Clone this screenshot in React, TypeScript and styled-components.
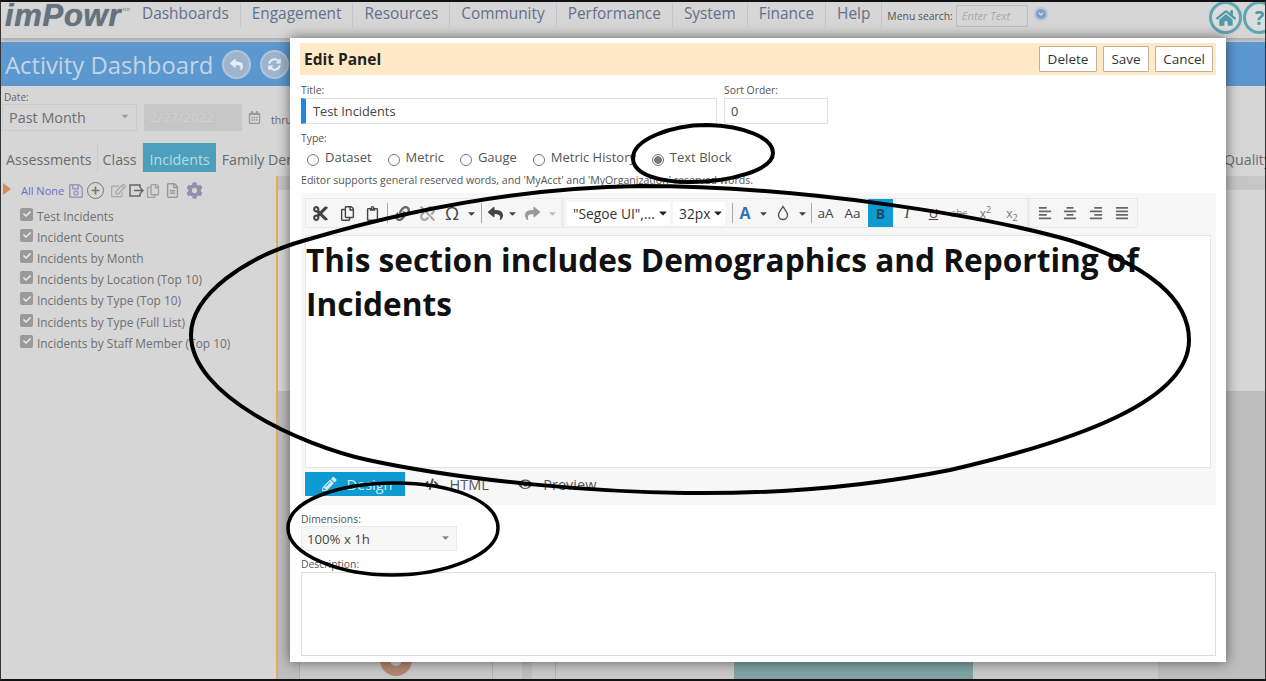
import React from "react";
import styled, { createGlobalStyle } from "styled-components";
import {
  FaCut, FaRegCopy, FaRegClipboard, FaLink, FaUnlink, FaReply, FaShare, FaAlignLeft, FaAlignCenter,
  FaAlignRight, FaAlignJustify, FaCaretDown, FaPencilAlt, FaCode, FaEye, FaHome, FaSyncAlt, FaCog,
  FaRegSave, FaPlus, FaRegCalendarAlt, FaCheck, FaRegFileAlt, FaRegEdit, FaChevronDown,
} from "react-icons/fa";

const GlobalStyle = createGlobalStyle`
  html, body { margin: 0; padding: 0; background: #000; }
  * { box-sizing: border-box; }
  body { font-family: "Open Sans", "Liberation Sans", sans-serif; }
`;

const Frame = styled.div`
  position: relative; width: 1266px; height: 681px; overflow: hidden; background: #d6d6d6;
  border-top: 2px solid #111; border-bottom: 2px solid #111; border-left: 1px solid #333; border-right: 1px solid #333;
  display: flex; flex-direction: column;
`;
const Nav = styled.div`
  height: 36px; display: flex; align-items: flex-start; padding: 0 0 0 4px; flex: none;
  box-shadow: 0 3px 4px rgba(0,0,0,.2);
`;
const Logo = styled.div`
  font: italic 700 31px/28px "Liberation Sans", sans-serif; color: #66727f; width: 126px; letter-spacing: 0.7px; position: relative; flex: none;
  text-shadow: 0 0 1px #66727f;
  sup { font: 400 6px/8px "Liberation Sans", sans-serif; position: absolute; left: 118px; top: 3px; color: #777; letter-spacing: 0; text-shadow: none; }
`;
const NavItem = styled.div`
  font-size: 15.4px; line-height: 22px; color: #62708f; padding: 0 11px 2px; margin-top: 1px; border-right: 1px solid #c4c4c4; height: 24px;
  white-space: nowrap;
`;
const NavSearchLabel = styled.div`font-size: 10.4px; color: #555; margin: 7px 3px 0 5px; white-space: nowrap;`;
const NavSearch = styled.div`
  width: 72px; height: 22px; margin-top: 3px; border: 1px solid #bdbdbd; padding: 0 5px; font: italic 11px/20px "Open Sans", sans-serif; color: #a8a8a8;
`;
const SmallDot = styled.div`
  width: 14px; height: 14px; border-radius: 50%; margin: 5px 0 0 6px; background: #7f9fc9; border: 2px solid #b5c6dc;
  display: flex; align-items: center; justify-content: center; color: #eee; font-size: 6px; flex: none;
`;
const NavRight = styled.div`margin-left: auto; display: flex; gap: 1px; margin: -1px -11px 0 auto;`;
const RoundBtn = styled.div`
  width: 33px; height: 33px; border-radius: 50%; border: 3px solid #5ea6b2; color: #4f9aa8; display: flex; align-items: center; justify-content: center;
  font-size: 20px; font-weight: 700; flex: none; background: #dcdcdc;
`;
const TitleBar = styled.div`
  height: 44px; margin-top: 4px; background: #5b98d0; display: flex; align-items: center; padding-left: 4px; gap: 9px; flex: none;
`;
const TitleText = styled.div`font-size: 23.8px; color: #c5d4e2; line-height: 44px; padding-top: 2px;`;
const TitleBtn = styled.div`
  width: 29px; height: 29px; border-radius: 50%; background: #9db4cf; border: 2px solid #b5c4d6; color: #e8edf2; font-size: 13px; display: flex; align-items: center; justify-content: center;
`;
const DateRow = styled.div`height: 57px; padding: 5px 0 0 1px; flex: none;`;
const FieldLabel = styled.div`font-size: 10px; line-height: 13px; color: #666; padding-left: 2px;`;
const DateControls = styled.div`display: flex; align-items: center;`;
const DateSelect = styled.div`
  width: 135px; height: 27px; border: 1px solid #cbcbcb; font-size: 14.4px; line-height: 25px; color: #6e6e6e; padding: 0 3px 0 6px;
  display: flex; justify-content: space-between; align-items: center; svg { color: #9a9a9a; font-size: 10px; margin-right: 3px; margin-top: -4px; }
`;
const DateInput = styled.div`
  width: 98px; height: 27px; margin-left: 7px; background: #c6c6c6; color: #d2d2d2; font-size: 13.5px; line-height: 27px; padding-left: 6px;
`;
const Calendar = styled.div`margin-left: 6px; color: #999; font-size: 13px; display: flex;`;
const Thru = styled.div`margin: 4px 0 0 10px; font-size: 10.5px; color: #666;`;
const Tabs = styled.div`height: 29px; display: flex; flex: none;`;
const Tab = styled.div<{ $active?: boolean }>`
  font-size: 14.2px; line-height: 25px; padding: 4px 5px 0; color: ${(p) => (p.$active ? "#b4dbe8" : "#6b6b6b")};
  background: ${(p) => (p.$active ? "#4e9fbb" : "transparent")}; border-right: ${(p) => (p.$active ? "0" : "1px solid #c9c9c9")}; white-space: nowrap;
  ${(p) => (p.$active ? "padding-left: 7px; padding-right: 6px; margin-right: 1px;" : "")}
  &:last-child { margin-left: auto; margin-right: -6px; border: 0; padding-right: 0; }
`;
const Body = styled.div`flex: 1; display: flex; min-height: 0;`;
const Sidebar = styled.div`width: 277px; border-right: 2px solid #dfae66; padding: 6px 0 0 2px; margin-top: 4px; flex: none;`;
const SideTools = styled.div`display: flex; align-items: center; height: 17px;`;
const Triangle = styled.div`
  width: 0; height: 0; border-left: 8px solid #d98a5d; border-top: 6px solid transparent; border-bottom: 6px solid transparent; margin-right: 10px; margin-top: -3px;
`;
const SideLink = styled.span`font-size: 11px; color: #6b6fcb; margin-right: 3px;`;
const ToolIcon = styled.span<{ $c?: string; $s?: number; $w?: number }>`
  display: inline-flex; width: ${(p) => p.$w ?? 20}px; justify-content: center; color: ${(p) => p.$c ?? "#9a9aa8"}; font-size: ${(p) => p.$s ?? 15}px;
`;
const PlusCircle = styled.span`
  width: 17px; height: 17px; border: 1px solid #777; border-radius: 50%; display: inline-flex; align-items: center; justify-content: center; font-size: 9px; color: #777; margin: 0 4px 0 3px;
`;
const SideList = styled.div`margin-top: 6px; padding-left: 17px;`;
const SideRow = styled.div`display: flex; align-items: center; height: 21.2px; font-size: 11.9px; color: #707070; white-space: nowrap; gap: 4px;`;
const CheckBox = styled.span`
  width: 13px; height: 13px; background: #9a9a9a; border-radius: 2px; color: #e9e9e9; display: inline-flex; align-items: center; justify-content: center; font-size: 8px; margin-top: -3px; flex: none;
`;
const Main = styled.div`flex: 1; position: relative; min-width: 0; margin-top: 4px; background: #d6d6d6;`;
const Strip = styled.div`height: 14px; background: #c6c6c6;`;
const Lower = styled.div`
  position: absolute; left: 0; right: 0; bottom: 0; height: 288px; display: grid; grid-template-columns: 21px 194px 29px 10px 626px 1fr; background: #bebebe;
`;
const LowerCard = styled.div`background: #c9c9c9; border-left: 1px solid #b0b0b0; border-right: 1px solid #b0b0b0; display: flex; justify-content: center; align-items: flex-end;`;
const LowerGap = styled.div`background: #c9c9c9;`;
const LowerWide = styled.div`background: #c9c9c9; padding-left: 23px; display: flex;`;
const LowerInner = styled.div`flex: 1; border-left: 1px solid #b0b0b0; display: flex; align-items: flex-end; padding-left: 178px;`;
const Ring = styled.div`width: 32px; height: 32px; border-radius: 50%; border: 10px solid #b18671; margin-bottom: 3px;`;
const TealCard = styled.div`width: 239px; height: 30px; background: #7fa3a3;`;

const Modal = styled.div`
  position: absolute; left: 289px; top: 36px; width: 936px; height: 624px; background: #fff; padding: 5px 10px 0 11px;
  box-shadow: 0 0 12px rgba(0,0,0,.55);
`;
const ModalHead = styled.div`
  height: 32px; margin-left: -1px; background: #ffe9c6; display: flex; align-items: center; padding: 0 3px 0 4px;
`;
const ModalTitle = styled.div`font-size: 15.5px; font-weight: 700; color: #222; flex: 1;`;
const HeadBtn = styled.button<{ $w: number }>`
  width: ${(p) => p.$w}px; height: 26px; padding: 0; border: 1px solid #bdb29e; background: #fff; font: 13.5px "Open Sans", sans-serif; color: #333; margin-left: 6px; border-radius: 1px;
`;
const TitleFields = styled.div`display: flex; gap: 7px; margin-top: 8px;`;
const Field = styled.div<{ $w: number }>`width: ${(p) => p.$w}px;`;
const Label = styled.div<{ $lh?: number }>`font-size: 10.4px; line-height: ${(p) => p.$lh ?? 15}px; color: #555; white-space: nowrap;`;
const Input = styled.div<{ $req?: boolean }>`
  height: 26px; border: 1px solid #dedede; border-left: ${(p) => (p.$req ? "5px solid #1e88e5" : "1px solid #dedede")}; font-size: 12.8px; line-height: 25px; color: #444;
  padding-left: ${(p) => (p.$req ? 7 : 6)}px;
`;
const TypeBlock = styled.div`margin-top: 7px;`;
const RadioRow = styled.div`display: flex; align-items: center; height: 22px; padding-left: 6px;`;
const RadioItem = styled.div`display: flex; align-items: center; font-size: 13px; color: #555; margin-right: 15.9px; gap: 6px; white-space: nowrap;`;
const Radio = styled.span<{ $on?: boolean }>`
  width: 12px; height: 12px; border: 1px solid #777; border-radius: 50%; margin-top: 5px; flex: none;
  background: ${(p) => (p.$on ? "radial-gradient(circle, #777 0 3.5px, #fff 4.2px)" : "#fff")};
`;
const Help = styled.div`font-size: 10.6px; line-height: 14px; color: #555; margin-top: 5px;`;
const EditorWrap = styled.div`background: #f7f7f7; margin-top: 6px; height: 312px; padding: 5px 5px 0 4px;`;
const Toolbar = styled.div`height: 30px; width: 833px; display: flex; align-items: center; border: 1px solid #e9e9e9; background: #f6f6f6;`;
const TB = styled.div<{ $w?: number; $c?: string; $bg?: string; $s?: number }>`
  width: ${(p) => p.$w ?? 24}px; height: 28px; display: flex; align-items: center; justify-content: center; flex: none;
  color: ${(p) => p.$c ?? "#444"}; background: ${(p) => p.$bg ?? "transparent"}; font-size: ${(p) => p.$s ?? 15}px;
`;
const TBSep = styled.div`width: 1px; height: 20px; background: #aaa; flex: none; margin: 0 2px;`;
const TBGap = styled.div`width: 3px; height: 28px; background: #ececec; margin: 0 3px 0 2px; flex: none;`;
const TBSelect = styled.div<{ $w: number; $mr: number }>`
  width: ${(p) => p.$w}px; height: 23px; background: #fff; font-size: 13.8px; line-height: 23px; color: #333; display: flex; align-items: center; justify-content: space-between; padding: 0 1px 0 6px; margin-right: ${(p) => p.$mr}px; white-space: nowrap; overflow: hidden; flex: none;
  svg { font-size: 12px; color: #222; flex: none; }
`;
const TBCaret = styled.span<{ $w: number; $c?: string }>`
  width: ${(p) => p.$w}px; font-size: 11px; color: ${(p) => p.$c ?? "#444"}; display: flex; justify-content: center; flex: none;
`;
const Sub = styled.span`font-size: 9px; position: relative; top: 4px;`;
const Sup = styled.span`font-size: 9px; position: relative; top: -4px;`;
const SerifI = styled.i`font-family: "Liberation Serif", serif;`;
const Content = styled.div`
  height: 233px; margin-top: 7px; width: 906px; background: #fff; border: 1px solid #e4e4e4; padding: 2px 0 0 0; font-size: 31.6px; line-height: 44px; font-weight: 700; color: #111;
`;
const EditorTabs = styled.div`display: flex; align-items: center; margin-top: 4px; height: 24px; color: #555; font-size: 14.5px;`;
const DesignTab = styled.div`
  width: 100px; height: 24px; background: #0e9bd2; color: #d4eef8; display: flex; align-items: center; gap: 10px; padding-left: 17px; margin-right: 19px;
`;
const ModeTab = styled.div<{ $mr: number }>`display: flex; align-items: center; gap: 11px; margin-right: ${(p) => p.$mr}px; white-space: nowrap;`;
const DimBlock = styled.div`margin-top: 7px;`;
const DimSelect = styled.div`
  width: 156px; height: 25px; background: #f7f7f7; border: 1px solid #eaeaea; font-size: 13.2px; line-height: 24px; color: #444; padding: 0 5px; display: flex; justify-content: space-between; align-items: center;
  svg { color: #888; font-size: 11px; margin-top: -2px; }
`;
const DescBlock = styled.div`margin-top: 6px;`;
const TextArea = styled.div`height: 84px; border: 1px solid #dedede;`;
const Scribble = styled.svg`position: absolute; left: -1px; top: -2px; width: 1266px; height: 681px; pointer-events: none;`;

const items = ["Test Incidents", "Incident Counts", "Incidents by Month", "Incidents by Location (Top 10)", "Incidents by Type (Top 10)", "Incidents by Type (Full List)", "Incidents by Staff Member (Top 10)"];

export default function App() {
  return (
    <Frame>
      <GlobalStyle />
      <Nav>
        <Logo>imPowr<sup>tm</sup></Logo>
        {["Dashboards", "Engagement", "Resources", "Community", "Performance", "System", "Finance", "Help"].map((n) => (
          <NavItem key={n}>{n}</NavItem>
        ))}
        <NavSearchLabel>Menu search:</NavSearchLabel>
        <NavSearch>Enter Text</NavSearch>
        <SmallDot><FaChevronDown /></SmallDot>
        <NavRight>
          <RoundBtn><FaHome /></RoundBtn>
          <RoundBtn>?</RoundBtn>
        </NavRight>
      </Nav>
      <TitleBar>
        <TitleText>Activity Dashboard</TitleText>
        <TitleBtn><FaReply /></TitleBtn>
        <TitleBtn><FaSyncAlt /></TitleBtn>
      </TitleBar>
      <DateRow>
        <FieldLabel>Date:</FieldLabel>
        <DateControls>
          <DateSelect>Past Month <FaCaretDown /></DateSelect>
          <DateInput>2/27/2022</DateInput>
          <Calendar><FaRegCalendarAlt /></Calendar>
          <Thru>thru</Thru>
        </DateControls>
      </DateRow>
      <Tabs>
        <Tab>Assessments</Tab>
        <Tab>Class</Tab>
        <Tab $active>Incidents</Tab>
        <Tab>Family Demographics</Tab>
        <Tab>Quality</Tab>
      </Tabs>
      <Body>
        <Sidebar>
          <SideTools>
            <Triangle />
            <SideLink>All None</SideLink>
            <ToolIcon $w={17} $c="#9a9ac0" $s={16}><FaRegSave /></ToolIcon>
            <PlusCircle><FaPlus /></PlusCircle>
            <ToolIcon $c="#a9a9a9"><FaRegEdit /></ToolIcon>
            <ToolIcon $w={16}>
              <svg width="15" height="13" viewBox="0 0 15 13" fill="none" stroke="#666" strokeWidth="1.5">
                <path d="M11 4V1H1v11h10V9" />
                <path d="M5 6.500h9M11.500 4l2.500 2.500L11.500 9" />
              </svg>
            </ToolIcon>
            <ToolIcon $w={18} $c="#a0a0a0" $s={14}><FaRegCopy /></ToolIcon>
            <ToolIcon $w={20} $c="#999"><FaRegFileAlt /></ToolIcon>
            <ToolIcon $w={24} $c="#8f8fb0" $s={17}><FaCog /></ToolIcon>
          </SideTools>
          <SideList>
            {items.map((t) => (
              <SideRow key={t}><CheckBox><FaCheck /></CheckBox>{t}</SideRow>
            ))}
          </SideList>
        </Sidebar>
        <Main>
          <Strip />
          <Lower>
            <div />
            <LowerCard><Ring /></LowerCard>
            <LowerGap />
            <div />
            <LowerWide><LowerInner><TealCard /></LowerInner></LowerWide>
          </Lower>
        </Main>
      </Body>

      <Modal>
        <ModalHead>
          <ModalTitle>Edit Panel</ModalTitle>
          <HeadBtn $w={58}>Delete</HeadBtn>
          <HeadBtn $w={46}>Save</HeadBtn>
          <HeadBtn $w={58}>Cancel</HeadBtn>
        </ModalHead>
        <TitleFields>
          <Field $w={416}><Label>Title:</Label><Input $req>Test Incidents</Input></Field>
          <Field $w={104}><Label>Sort Order:</Label><Input>0</Input></Field>
        </TitleFields>
        <TypeBlock>
          <Label>Type:</Label>
          <RadioRow>
            <RadioItem><Radio />Dataset</RadioItem>
            <RadioItem><Radio />Metric</RadioItem>
            <RadioItem><Radio />Gauge</RadioItem>
            <RadioItem><Radio />Metric History</RadioItem>
            <RadioItem><Radio $on />Text Block</RadioItem>
          </RadioRow>
        </TypeBlock>
        <Help>Editor supports general reserved words, and 'MyAcct' and 'MyOrganization' reserved words.</Help>
        <EditorWrap>
          <Toolbar>
            <TB $w={28} $s={17}><FaCut /></TB>
            <TB $w={26}><FaRegCopy /></TB>
            <TB $w={25}><FaRegClipboard /></TB>
            <TBSep />
            <TB $w={24} $c="#666"><FaLink /></TB>
            <TB $w={26} $c="#aaa"><FaUnlink /></TB>
            <TB $w={24} $s={18}>Ω</TB>
            <TBCaret $w={15}><FaCaretDown /></TBCaret>
            <TBSep />
            <TB $w={22}><FaReply /></TB>
            <TBCaret $w={12}><FaCaretDown /></TBCaret>
            <TB $w={28} $c="#999"><FaShare /></TB>
            <TBCaret $w={13} $c="#bbb"><FaCaretDown /></TBCaret>
            <TBGap />
            <TBSelect $w={103} $mr={3}>"Segoe UI",...<FaCaretDown /></TBSelect>
            <TBSelect $w={52} $mr={5}>32px<FaCaretDown /></TBSelect>
            <TBSep />
            <TB $w={20} $c="#2f74b5" $s={16}><b>A</b></TB>
            <TBCaret $w={16}><FaCaretDown /></TBCaret>
            <TB $w={24}><svg width="14" height="16" viewBox="0 0 14 16" fill="none" stroke="#555" strokeWidth="1.4"><path d="M7 1.500C5 5 2.500 7 2.500 10a4.500 4.500 0 0 0 9 0C11.500 7 9 5 7 1.500Z" /></svg></TB>
            <TBCaret $w={14}><FaCaretDown /></TBCaret>
            <TBSep />
            <TB $w={23} $s={13.5}>aA</TB>
            <TB $w={31} $s={13.5}>Aa</TB>
            <TB $w={25} $bg="#0e9bd2" $c="#1f4a63" $s={14}><b>B</b></TB>
            <TB $w={28}><SerifI>I</SerifI></TB>
            <TB $w={25} $s={13}><u>U</u></TB>
            <TB $w={26} $c="#888" $s={10}><s>abc</s></TB>
            <TB $w={27} $c="#777" $s={12}>x<Sup>2</Sup></TB>
            <TB $w={26} $c="#777" $s={12}>x<Sub>2</Sub></TB>
            <TBGap />
            <TB $w={24} $c="#666" $s={14}><FaAlignLeft /></TB>
            <TB $w={26} $c="#666" $s={14}><FaAlignCenter /></TB>
            <TB $w={26} $c="#666" $s={14}><FaAlignRight /></TB>
            <TB $w={26} $c="#666" $s={14}><FaAlignJustify /></TB>
          </Toolbar>
          <Content>This section includes Demographics and Reporting of Incidents</Content>
          <EditorTabs>
            <DesignTab><FaPencilAlt />Design</DesignTab>
            <ModeTab $mr={29}><FaCode />HTML</ModeTab>
            <ModeTab $mr={0}><FaEye />Preview</ModeTab>
          </EditorTabs>
        </EditorWrap>
        <DimBlock>
          <Label $lh={14}>Dimensions:</Label>
          <DimSelect>100% x 1h<FaCaretDown /></DimSelect>
        </DimBlock>
        <DescBlock>
          <Label>Description:</Label>
          <TextArea />
        </DescBlock>
      </Modal>

      <Scribble viewBox="0 0 1266 681" fill="none" stroke="#000">
        <path strokeWidth="4" d="M707 125C745 126 773 138 773 153C773 170 730 182 690 182C660 182 633 175 633 158C633 140 670 125 707 125Z" />
        <path strokeWidth="4" d="M640 186C800 186 980 215 1069 240C1150 265 1189 300 1189 340C1189 400 1080 440 950 470C860 488 770 494 685 493C600 492 470 482 368 460C300 445 191 395 191 335C191 295 245 257 306 240C380 218 500 188 640 186Z" />
        <path strokeWidth="3.5" d="M395 483C450 483 498 500 498 528C498 555 445 575 392 575C340 575 288 555 288 528C288 500 340 483 395 483Z" />
      </Scribble>
    </Frame>
  );
}
